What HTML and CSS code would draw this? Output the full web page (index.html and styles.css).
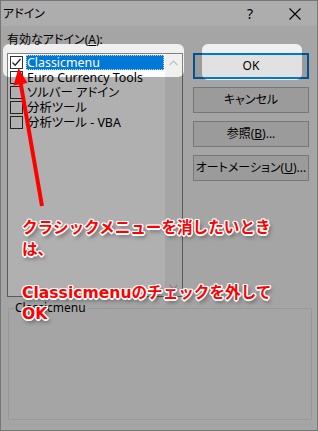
FILE: index.html
```html
<!DOCTYPE html>
<html lang="ja">
<head>
<meta charset="utf-8">
<title>アドイン</title>
<link rel="stylesheet" href="styles.css">
</head>
<body>
<div class="window">
  <div class="titlebar">
    <span class="title">アドイン</span>
    <span class="help">?</span>
    <svg class="close" width="12" height="12" viewBox="0 0 12 12"><path d="M0.5 0.5L11.5 11.5M11.5 0.5L0.5 11.5" stroke="#000" stroke-width="1.1" fill="none"/></svg>
  </div>
  <div class="content">
    <div class="main">
      <div class="left">
        <div class="label">有効なアドイン(<u>A</u>):</div>
        <div class="listbox">
          <div class="items">
            <div class="row selected">
              <span class="check"><svg width="11" height="11" viewBox="0 0 11 11"><path d="M1.5 5.5L4.2 8.2L9.5 2" stroke="#222" stroke-width="1.3" fill="none"/></svg></span>
              <span class="text">Classicmenu</span>
            </div>
            <div class="row"><span class="check"></span><span class="text">Euro Currency Tools</span></div>
            <div class="row"><span class="check"></span><span class="text">ソルバー アドイン</span></div>
            <div class="row"><span class="check"></span><span class="text">分析ツール</span></div>
            <div class="row"><span class="check"></span><span class="text">分析ツール - VBA</span></div>
          </div>
          <div class="scrollbar">
            <svg width="9" height="6" viewBox="0 0 9 6"><path d="M0.5 5L4.5 1L8.5 5" stroke="#bfbfbf" stroke-width="1.2" fill="none"/></svg>
            <svg width="9" height="6" viewBox="0 0 9 6"><path d="M0.5 1L4.5 5L8.5 1" stroke="#bfbfbf" stroke-width="1.2" fill="none"/></svg>
          </div>
        </div>
      </div>
      <div class="buttons">
        <div class="btn default">OK</div>
        <div class="btn">キャンセル</div>
        <div class="btn">参照(<u>B</u>)...</div>
        <div class="btn">オートメーション(<u>U</u>)...</div>
      </div>
    </div>
    <fieldset class="group"><legend>Classicmenu</legend></fieldset>
  </div>

  <svg class="dim" width="318" height="431" viewBox="0 0 318 431">
    <path fill="rgba(0,0,0,0.31)" fill-rule="evenodd" d="M0 0H318V431H0Z M9 44H178A6 6 0 0 1 184 50V71A6 6 0 0 1 178 77H9A6 6 0 0 1 3 71V50A6 6 0 0 1 9 44Z M208 44H296A6 6 0 0 1 302 50V74A6 6 0 0 1 296 80H208A6 6 0 0 1 202 74V50A6 6 0 0 1 208 44Z"/>
  </svg>

  <svg class="arrow" width="318" height="431" viewBox="0 0 318 431">
    <line x1="42" y1="206" x2="20.8" y2="84" stroke="#ff0000" stroke-width="4"/>
    <polygon points="18.5,68 27.5,83 13.5,85.5" fill="#ff0000"/>
  </svg>

  <div class="note">クラシックメニューを消したいとき<br>は、<br><br>Classicmenuのチェックを外して<br>OK</div>
</div>
</body>
</html>
```

FILE: styles.css
```css
* { box-sizing: border-box; }
html, body { margin: 0; padding: 0; }
body {
  background: #f0f0f0;
  font-family: "Noto Sans", "Noto Sans CJK JP", sans-serif;
  font-feature-settings: "palt" 1;
  font-size: 12px;
  color: #000;
}
.window {
  position: relative;
  width: 318px;
  height: 431px;
  border: 1px solid #767676;
  background: #f0f0f0;
  overflow: hidden;
}
.titlebar {
  height: 25px;
  background: #fbfbfb;
  display: flex;
  align-items: center;
  padding-left: 2px;
}
.title { font-size: 12px; line-height: 16px; flex: 1; }
.help { font-size: 14px; line-height: 16px; width: 42px; }
.close { margin-right: 16px; }
.content {
  padding: 6px 7px 0 6px;
}
.main {
  display: grid;
  grid-template-columns: 176px 116px;
  column-gap: 10px;
}
.label { line-height: 16px; height: 16px; }
.listbox {
  margin-top: 5px;
  height: 244px;
  border: 1px solid #828282;
  background: #fff;
  display: flex;
}
.items { flex: 1; padding-top: 1px; }
.row {
  height: 15px;
  display: flex;
  align-items: center;
  padding-left: 2px;
}
.check {
  width: 13px;
  height: 13px;
  border: 1px solid #333;
  background: #fff;
  display: flex;
  align-items: center;
  justify-content: center;
  flex: none;
}
.text {
  margin-left: 3px;
  padding-left: 1px;
  font-size: 12.4px;
  line-height: 15px;
  height: 15px;
  white-space: nowrap;
  flex: 1;
}
.selected .text {
  background: #0078d7;
  color: #fff;
  outline: 1px dotted rgba(255,255,255,0.7);
  outline-offset: -1px;
  margin-right: 1px;
}
.scrollbar {
  width: 17px;
  background: #f0f0f0;
  display: flex;
  flex-direction: column;
  justify-content: space-between;
  align-items: center;
  padding: 6px 0 6px;
}
.buttons {
  margin-top: 21px;
  display: flex;
  flex-direction: column;
  gap: 8px;
}
.btn {
  height: 26px;
  border: 1px solid #adadad;
  background: #e1e1e1;
  display: flex;
  align-items: center;
  justify-content: center;
  line-height: 16px;
  white-space: nowrap;
}
.btn.default { border: 2px solid #0078d7; }
.group {
  margin: 4px 0 0 1px;
  width: 304px;
  height: 119px;
  border: 1px solid #dcdcdc;
  padding: 0 0 0 5px;
}
.group legend {
  padding: 0 1px;
  line-height: 14px;
}
.dim, .arrow {
  position: absolute;
  left: -1px;
  top: -1px;
}
.note {
  position: absolute;
  left: 21px;
  top: 217px;
  white-space: nowrap;
  font-family: "DejaVu Sans", "Noto Sans CJK JP", sans-serif;
  font-feature-settings: normal;
  font-weight: bold;
  font-size: 15.6px;
  line-height: 21.5px;
  color: #ff0000;
  text-shadow:
    -1.5px 0 0 #fff, 1.5px 0 0 #fff, 0 -1.5px 0 #fff, 0 1.5px 0 #fff,
    -1px -1px 0 #fff, 1px 1px 0 #fff, -1px 1px 0 #fff, 1px -1px 0 #fff,
    2px 3px 4px rgba(0,0,0,0.55);
}
```
